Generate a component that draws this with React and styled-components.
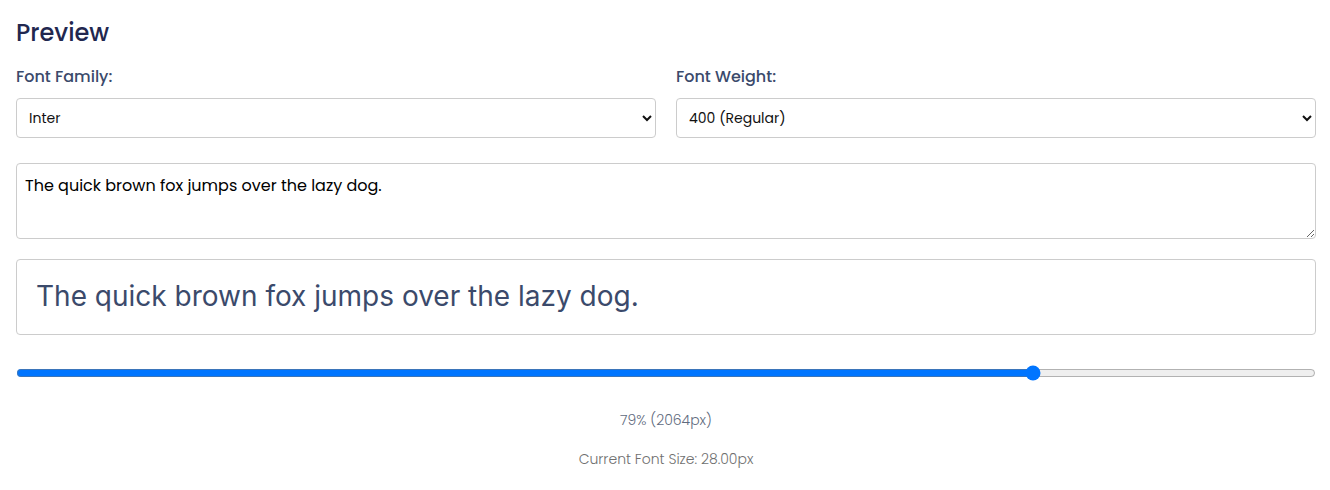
import React, { useState } from "react";
import styled, { createGlobalStyle } from "styled-components";

const GlobalStyle = createGlobalStyle`
  body {
    margin: 0;
    background: #ffffff;
    font-family: "Poppins", "Noto Sans", "Liberation Sans", sans-serif;
  }
`;

const Page = styled.div`
  padding: 15px 14px 16px 16px;
`;

const Title = styled.h2`
  margin: 0 0 14px;
  font-size: 24px;
  line-height: 36px;
  font-weight: 500;
  color: #22274f;
`;

const Row = styled.div`
  display: grid;
  grid-template-columns: 1fr 1fr;
  gap: 20px;
`;

const Field = styled.div`
  display: flex;
  flex-direction: column;
`;

const Label = styled.label`
  font-size: 16px;
  line-height: 24px;
  font-weight: 500;
  color: #3b4a6b;
  margin: 0 0 9px;
`;

const Select = styled.select`
  height: 40px;
  padding: 0 8px;
  border: 1px solid #cccccc;
  border-radius: 4px;
  background: #ffffff;
  font-family: inherit;
  font-size: 14px;
  color: #111111;
`;

const TextArea = styled.textarea`
  display: block;
  box-sizing: border-box;
  width: 100%;
  height: 76px;
  margin-top: 25px;
  padding: 10px 8px;
  border: 1px solid #cccccc;
  border-radius: 4px;
  font-family: inherit;
  font-size: 16px;
  line-height: 24px;
  color: #000000;
  resize: vertical;
`;

const PreviewBox = styled.div`
  margin-top: 20px;
  padding: 20px 20px 20px 19px;
  border: 1px solid #cccccc;
  border-radius: 4px;
  font-family: ${(p) => p.$family}, sans-serif;
  font-weight: ${(p) => p.$weight};
  font-size: ${(p) => p.$size}px;
  line-height: 1.2;
  color: #3b4a6b;
`;

const Range = styled.input`
  display: block;
  width: 100%;
  margin: 30px 0 0;
  height: 16px;
`;

const Percent = styled.div`
  margin-top: 29px;
  text-align: center;
  font-size: 14px;
  line-height: 20px;
  font-weight: 300;
  color: #5f6b7e;
`;

const SizeNote = styled.div`
  margin-top: 19px;
  text-align: center;
  font-size: 14px;
  line-height: 20px;
  font-weight: 300;
  color: #6f6f6f;
`;

export default function App() {
  const [family, setFamily] = useState("Inter");
  const [weight, setWeight] = useState("400");
  const [text, setText] = useState("The quick brown fox jumps over the lazy dog.");
  const [pct, setPct] = useState(78.6);

  return (
    <Page>
      <GlobalStyle />
      <Title>Preview</Title>
      <Row>
        <Field>
          <Label>Font Family:</Label>
          <Select value={family} onChange={(e) => setFamily(e.target.value)}>
            <option>Inter</option>
            <option>Roboto</option>
            <option>Lato</option>
            <option>Open Sans</option>
          </Select>
        </Field>
        <Field>
          <Label>Font Weight:</Label>
          <Select value={weight} onChange={(e) => setWeight(e.target.value)}>
            <option value="300">300 (Light)</option>
            <option value="400">400 (Regular)</option>
            <option value="500">500 (Medium)</option>
            <option value="700">700 (Bold)</option>
          </Select>
        </Field>
      </Row>
      <TextArea value={text} onChange={(e) => setText(e.target.value)} />
      <PreviewBox $family={family} $weight={weight} $size={28}>
        {text}
      </PreviewBox>
      <Range
        type="range"
        min="0"
        max="100"
        step="any"
        value={pct}
        onChange={(e) => setPct(Number(e.target.value))}
      />
      <Percent>79% (2064px)</Percent>
      <SizeNote>Current Font Size: 28.00px</SizeNote>
    </Page>
  );
}
